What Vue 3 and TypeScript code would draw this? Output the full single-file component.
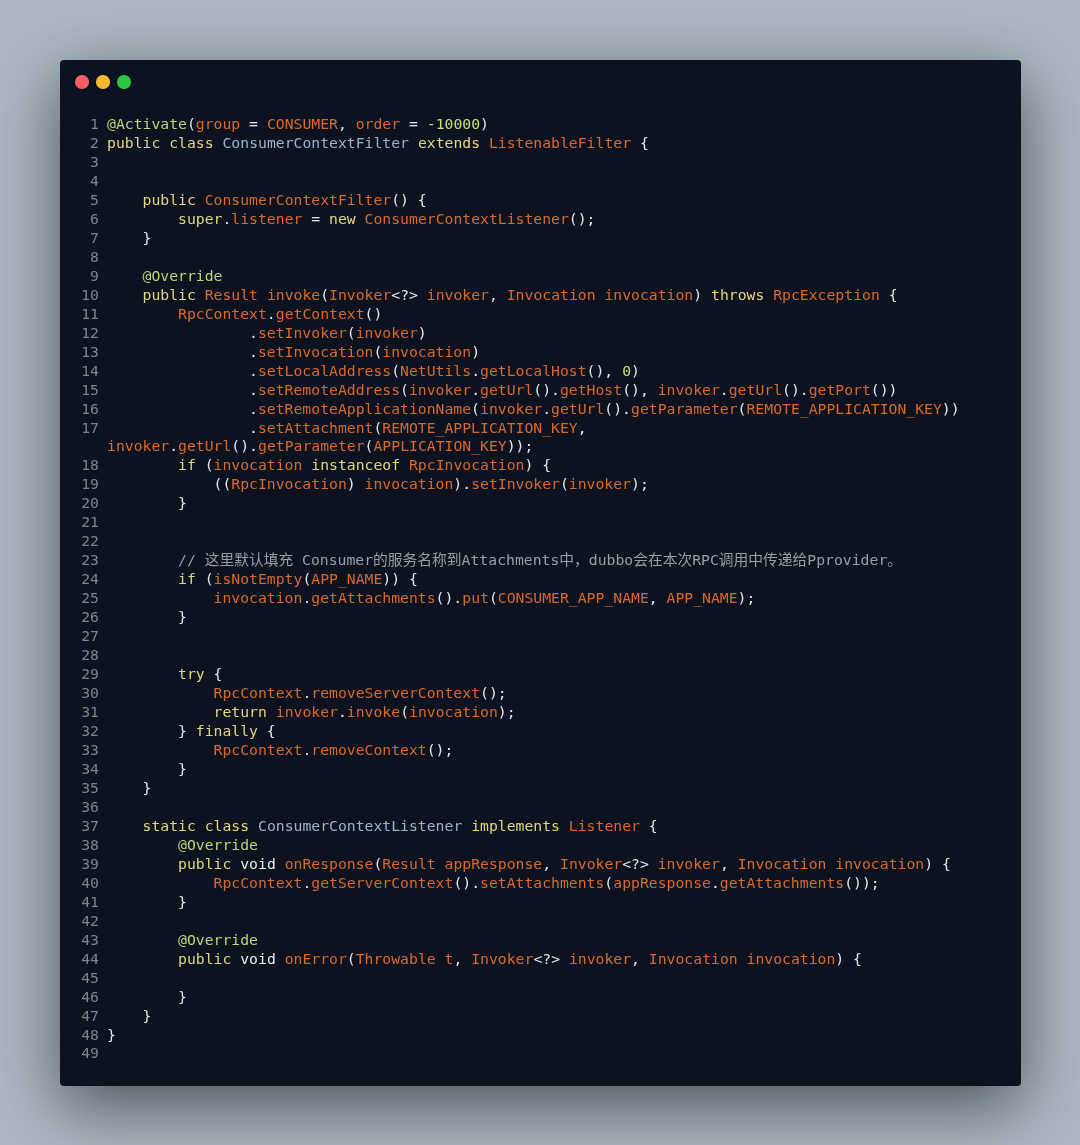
<script setup lang="ts">
interface Tok { c: string; t: string }
interface Row { n: string; toks: Tok[] }

const src: [string, string][] = [
  ['1', '§a|@Activate§(§o|group§ = §o|CONSUMER§, §o|order§ = §n|-10000§)'],
  ['2', '§k|public§ §k|class§ §c|ConsumerContextFilter§ §k|extends§ §o|ListenableFilter§ {'],
  ['3', ''],
  ['4', ''],
  ['5', '    §k|public§ §o|ConsumerContextFilter§() {'],
  ['6', '        §k|super§.§o|listener§ = §k|new§ §o|ConsumerContextListener§();'],
  ['7', '    }'],
  ['8', ''],
  ['9', '    §a|@Override§'],
  ['10', '    §k|public§ §o|Result§ §o|invoke§(§o|Invoker§<?> §o|invoker§, §o|Invocation§ §o|invocation§) §k|throws§ §o|RpcException§ {'],
  ['11', '        §o|RpcContext§.§o|getContext§()'],
  ['12', '                .§o|setInvoker§(§o|invoker§)'],
  ['13', '                .§o|setInvocation§(§o|invocation§)'],
  ['14', '                .§o|setLocalAddress§(§o|NetUtils§.§o|getLocalHost§(), §n|0§)'],
  ['15', '                .§o|setRemoteAddress§(§o|invoker§.§o|getUrl§().§o|getHost§(), §o|invoker§.§o|getUrl§().§o|getPort§())'],
  ['16', '                .§o|setRemoteApplicationName§(§o|invoker§.§o|getUrl§().§o|getParameter§(§o|REMOTE_APPLICATION_KEY§))'],
  ['17', '                .§o|setAttachment§(§o|REMOTE_APPLICATION_KEY§,'],
  ['', '§o|invoker§.§o|getUrl§().§o|getParameter§(§o|APPLICATION_KEY§));'],
  ['18', '        §k|if§ (§o|invocation§ §k|instanceof§ §o|RpcInvocation§) {'],
  ['19', '            ((§o|RpcInvocation§) §o|invocation§).§o|setInvoker§(§o|invoker§);'],
  ['20', '        }'],
  ['21', ''],
  ['22', ''],
  ['23', '        §m|// 这里默认填充 Consumer的服务名称到Attachments中，dubbo会在本次RPC调用中传递给Pprovider。§'],
  ['24', '        §k|if§ (§o|isNotEmpty§(§o|APP_NAME§)) {'],
  ['25', '            §o|invocation§.§o|getAttachments§().§o|put§(§o|CONSUMER_APP_NAME§, §o|APP_NAME§);'],
  ['26', '        }'],
  ['27', ''],
  ['28', ''],
  ['29', '        §k|try§ {'],
  ['30', '            §o|RpcContext§.§o|removeServerContext§();'],
  ['31', '            §k|return§ §o|invoker§.§o|invoke§(§o|invocation§);'],
  ['32', '        } §k|finally§ {'],
  ['33', '            §o|RpcContext§.§o|removeContext§();'],
  ['34', '        }'],
  ['35', '    }'],
  ['36', ''],
  ['37', '    §k|static§ §k|class§ §c|ConsumerContextListener§ §k|implements§ §o|Listener§ {'],
  ['38', '        §a|@Override§'],
  ['39', '        §k|public§ §w|void§ §o|onResponse§(§o|Result§ §o|appResponse§, §o|Invoker§<?> §o|invoker§, §o|Invocation§ §o|invocation§) {'],
  ['40', '            §o|RpcContext§.§o|getServerContext§().§o|setAttachments§(§o|appResponse§.§o|getAttachments§());'],
  ['41', '        }'],
  ['42', ''],
  ['43', '        §a|@Override§'],
  ['44', '        §k|public§ §w|void§ §o|onError§(§o|Throwable§ §o|t§, §o|Invoker§<?> §o|invoker§, §o|Invocation§ §o|invocation§) {'],
  ['45', ''],
  ['46', '        }'],
  ['47', '    }'],
  ['48', '}'],
  ['49', ''],
]

function parse(s: string): Tok[] {
  return s.split('§').filter((p) => p.length > 0).map((p) => {
    const m = /^([a-z])\|([\s\S]*)$/.exec(p)
    return m ? { c: m[1], t: m[2] } : { c: 'p', t: p }
  })
}

const rows: Row[] = src.map(([n, s]) => ({ n, toks: parse(s) }))
</script>

<template>
  <div class="page">
    <div class="window">
      <div class="bar">
        <span class="dot red"></span>
        <span class="dot yellow"></span>
        <span class="dot green"></span>
      </div>
      <div class="code">
        <div v-for="(r, i) in rows" :key="i" class="row">
          <span class="num">{{ r.n }}</span>
          <span class="text"><span v-for="(t, j) in r.toks" :key="j" :class="t.c">{{ t.t }}</span></span>
        </div>
      </div>
    </div>
  </div>
</template>

<style>
html, body { margin: 0; padding: 0; }
</style>

<style scoped>
.page {
  width: 1080px;
  height: 1145px;
  box-sizing: border-box;
  padding: 60px 59px 59px 60px;
  background: #abb8c3;
  overflow: hidden;
}
.window {
  height: 1026px;
  box-sizing: border-box;
  background: #0d1220;
  border-radius: 4px;
  box-shadow: 0 20px 68px rgba(0, 0, 0, 0.55);
}
.bar {
  display: flex;
  gap: 7.5px;
  padding: 15px 15px 0;
  height: 55px;
  box-sizing: border-box;
}
.dot {
  width: 13.5px;
  height: 13.5px;
  border-radius: 50%;
}
.red { background: #f45f5f; }
.yellow { background: #fcb92f; }
.green { background: #2ac840; }
.code {
  font-family: "DejaVu Sans Mono", "Noto Sans CJK SC", monospace;
  font-size: 14.75px;
  filter: blur(0.4px);
}
.row {
  display: flex;
  height: 18.97px;
  line-height: 18.97px;
  white-space: pre;
}
.num {
  width: 39px;
  text-align: right;
  color: #7f838c;
  flex: none;
}
.text {
  margin-left: 8px;
}
.p { color: #e4e8ec; }
.k { color: #e3d67f; }
.o { color: #d96a2b; }
.a { color: #b9d873; }
.c { color: #9db2cc; }
.n { color: #c5e07a; }
.m { color: #9a9ea6; }
.w { color: #e8ecf0; }
</style>
